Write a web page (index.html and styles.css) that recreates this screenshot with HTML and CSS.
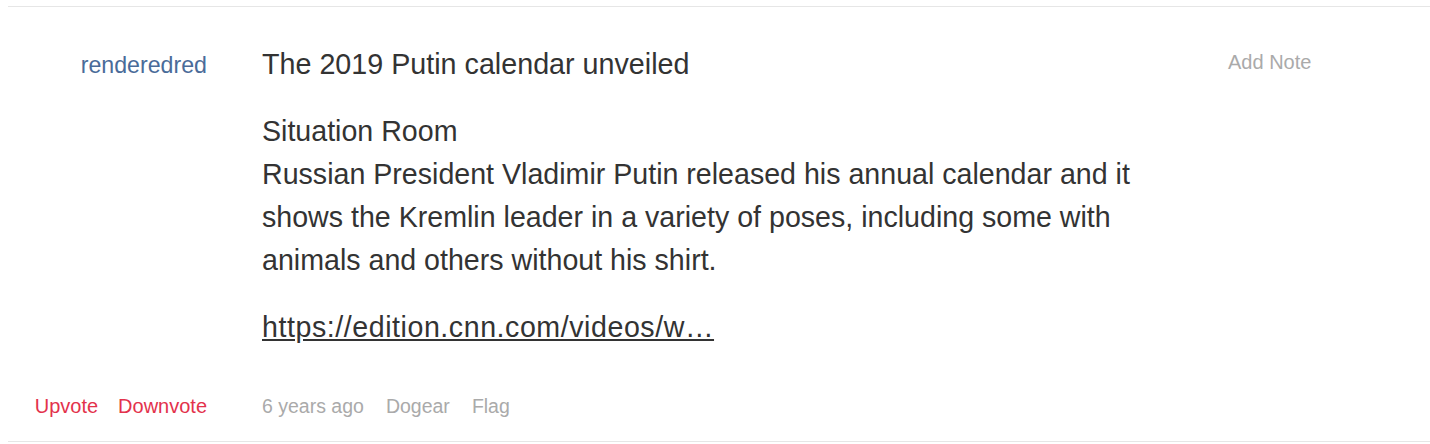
FILE: index.html
```html
<!DOCTYPE html>
<html lang="en">
<head>
<meta charset="utf-8">
<title>Story</title>
<link rel="stylesheet" href="styles.css">
</head>
<body>
<article class="item">
  <div class="author"><a class="user" href="#">renderedred</a></div>
  <div class="main">
    <h2 class="title">The 2019 Putin calendar unveiled</h2>
    <p class="desc">Situation Room<br>Russian President Vladimir Putin released his annual calendar and it shows the Kremlin leader in a variety of poses, including some with animals and others without his shirt.</p>
    <p class="link"><a href="#">https://edition.cnn.com/videos/w…</a></p>
  </div>
  <div class="side"><a class="note" href="#">Add Note</a></div>
  <div class="votes">
    <a class="vote" href="#">Upvote</a>
    <a class="vote" href="#">Downvote</a>
  </div>
  <div class="meta">
    <span class="meta-item">6 years ago</span>
    <a class="meta-item" href="#">Dogear</a>
    <a class="meta-item" href="#">Flag</a>
  </div>
</article>
</body>
</html>
```
FILE: styles.css
```css
html, body {
  margin: 0;
  padding: 0;
  background: #fff;
}

body {
  font-family: "Liberation Sans", Arial, Helvetica, sans-serif;
  color: #333;
}

a {
  text-decoration: none;
}

.item {
  margin: 6px 0 0 8px;
  border-top: 1px solid #e6e6e6;
  border-bottom: 1px solid #e6e6e6;
  padding: 36px 0 20px 0;
  display: grid;
  grid-template-columns: 199px 911px 1fr;
  column-gap: 55px;
  row-gap: 42px;
}

.author {
  text-align: right;
  padding-top: 8px;
}

.user {
  font-size: 23.2px;
  line-height: 28px;
  color: #4a6b99;
}

.main {
  min-width: 0;
}

.title {
  margin: 0;
  font-size: 28.7px;
  font-weight: normal;
  line-height: 43px;
  color: #333;
}

.desc {
  margin: 24px 0 0 0;
  font-size: 28.6px;
  line-height: 43px;
}

.link {
  margin: 24px 0 0 0;
  font-size: 28.6px;
  line-height: 43px;
  letter-spacing: 0.55px;
}

.link a {
  color: #333;
  text-decoration: underline;
}

.side {
  padding-top: 5px;
}

.note {
  font-size: 20px;
  line-height: 28px;
  color: #aaa;
}

.votes {
  display: flex;
  justify-content: flex-end;
  gap: 20px;
}

.vote,
.meta-item {
  font-size: 20px;
  line-height: 30px;
}

.vote {
  color: #e3324c;
}

.meta {
  display: flex;
  gap: 22px;
}

.meta-item {
  color: #aaa;
  font-size: 19.5px;
}
```
